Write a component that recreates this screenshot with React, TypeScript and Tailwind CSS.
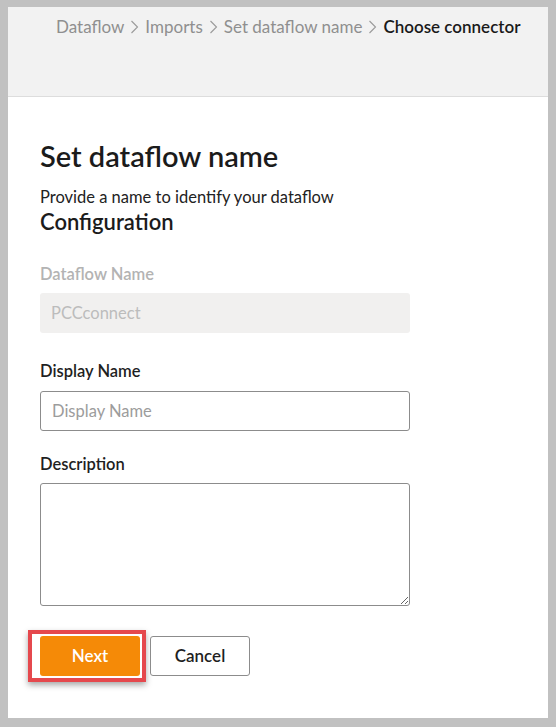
import React from "react";

const crumbs = ["Dataflow", "Imports", "Set dataflow name"];

function Chevron() {
  return (
    <svg width="9" height="16" viewBox="0 0 9 16" className="mx-[6px] shrink-0" fill="none">
      <polyline points="1.5,2 7.5,8 1.5,14" stroke="#9a9a9a" strokeWidth="1.1" />
    </svg>
  );
}

export default function App() {
  return (
    <div
      className="w-[556px] h-[727px] bg-[#c1c1c1] pt-[7px] pl-[8px] pr-[8px] pb-[9px]"
      style={{ fontFamily: "Lato, 'Open Sans', sans-serif" }}
    >
      <div className="h-full bg-white flex flex-col">
        <div className="h-[90px] bg-[#f2f2f2] border-b border-[#dddddd] pt-[8px] pl-[48px]">
          <div className="flex items-center text-[17px] leading-[24px]">
            {crumbs.map((c) => (
              <React.Fragment key={c}>
                <span className="text-[#8f8f8f]">{c}</span>
                <Chevron />
              </React.Fragment>
            ))}
            <span className="text-[#1a1a1a] font-semibold">Choose connector</span>
          </div>
        </div>

        <div className="pl-[32px] pt-[40px] flex flex-col">
          <h1 className="text-[29px] leading-[37px] font-semibold text-[#1b1b1b]">Set dataflow name</h1>
          <p className="mt-[12px] text-[16.5px] leading-[22px] text-[#222]">
            Provide a name to identify your dataflow
          </p>
          <h2 className="text-[22px] leading-[28px] font-semibold text-[#1b1b1b]">Configuration</h2>

          <label className="mt-[27px] text-[16.5px] leading-[22px] font-semibold text-[#b3b3b3]">
            Dataflow Name
          </label>
          <div className="mt-[8px] w-[370px] h-[40px] rounded-[3px] bg-[#f1f0ef] flex items-center px-[11px] text-[16.5px] text-[#bcbcbc]">
            PCCconnect
          </div>

          <label className="mt-[27px] text-[16.5px] leading-[22px] font-semibold text-[#1f1f1f]">
            Display Name
          </label>
          <input
            placeholder="Display Name"
            className="mt-[9px] w-[370px] h-[40px] rounded-[3px] border border-[#8c8c8c] px-[11px] text-[16.5px] text-[#222] placeholder:text-[#9c9c9c] outline-none"
          />

          <label className="mt-[22px] text-[16.5px] leading-[22px] font-semibold text-[#1f1f1f]">
            Description
          </label>
          <textarea className="mt-[8px] w-[370px] h-[123px] rounded-[3px] border border-[#8c8c8c] px-[11px] py-[8px] text-[16px] outline-none" />

          <div className="mt-[24px] flex items-center">
            <div className="-ml-[12px] border-[4px] border-[#e5484d] pl-[8px] pr-[2px] py-[2px] bg-white shadow-[0_3px_6px_rgba(0,0,0,0.35)]">
              <button className="block w-[100px] h-[40px] rounded-[3px] bg-[#f58a07] text-white text-[17px] font-semibold">
                Next
              </button>
            </div>
            <button className="ml-[4px] w-[100px] h-[40px] rounded-[3px] border border-[#8c8c8c] bg-white text-[#1f1f1f] text-[17px] font-semibold">
              Cancel
            </button>
          </div>
        </div>
      </div>
    </div>
  );
}
